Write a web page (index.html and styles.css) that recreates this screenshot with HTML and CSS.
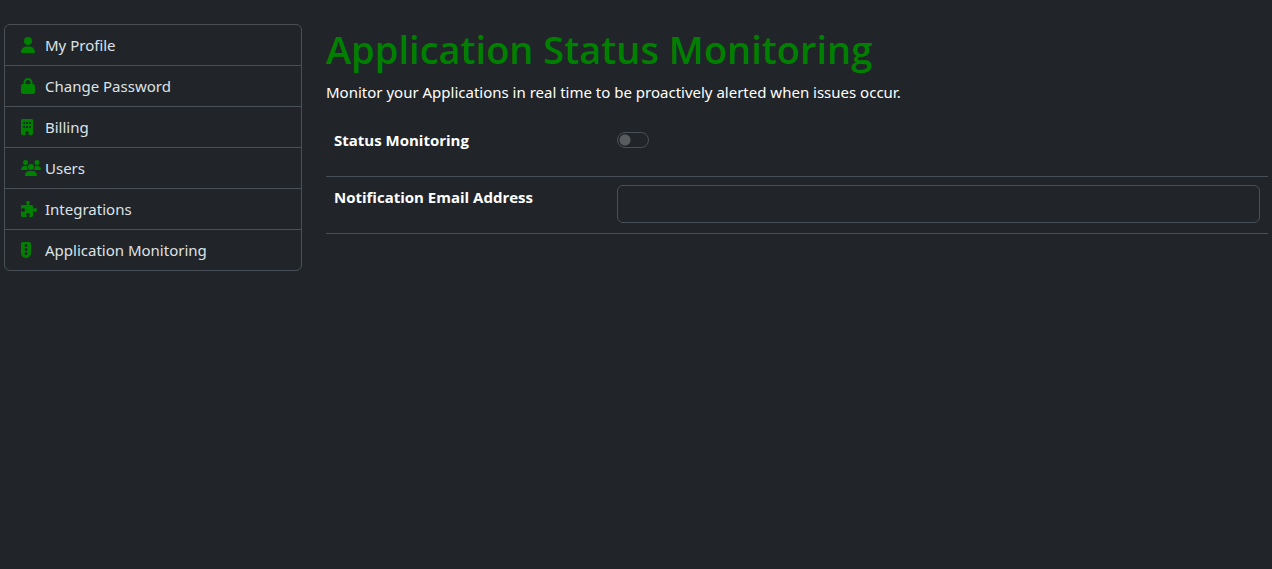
FILE: index.html
```html
<!DOCTYPE html>
<html lang="en">
<head>
<meta charset="utf-8">
<meta name="viewport" content="width=device-width, initial-scale=1">
<title>Application Status Monitoring</title>
<link rel="stylesheet" href="styles.css">
</head>
<body>
<div class="page">
  <nav class="menu" aria-label="Account">
    <a class="menu-item" href="#profile">
      <span class="icon"><svg viewBox="0 0 448 512" aria-hidden="true"><path d="M224 256A128 128 0 1 0 224 0a128 128 0 1 0 0 256zm-45.700 48C79.800 304 0 383.800 0 482.300C0 498.700 13.300 512 29.700 512H418.300c16.400 0 29.700-13.300 29.700-29.700C448 383.800 368.200 304 269.700 304H178.300z"/></svg></span>
      My Profile
    </a>
    <a class="menu-item" href="#password">
      <span class="icon"><svg viewBox="0 0 448 512" aria-hidden="true"><path d="M144 144v48H304V144c0-44.200-35.800-80-80-80s-80 35.800-80 80zM80 192V144C80 64.500 144.500 0 224 0s144 64.500 144 144v48h16c35.300 0 64 28.700 64 64V448c0 35.300-28.700 64-64 64H64c-35.300 0-64-28.700-64-64V256c0-35.300 28.700-64 64-64H80z"/></svg></span>
      Change Password
    </a>
    <a class="menu-item" href="#billing">
      <span class="icon"><svg viewBox="0 0 384 512" aria-hidden="true"><path d="M48 0C21.500 0 0 21.500 0 48V464c0 26.500 21.500 48 48 48h96V432c0-26.500 21.500-48 48-48s48 21.500 48 48v80h96c26.500 0 48-21.500 48-48V48c0-26.500-21.500-48-48-48H48zM64 240c0-8.800 7.200-16 16-16h32c8.800 0 16 7.200 16 16v32c0 8.800-7.200 16-16 16H80c-8.800 0-16-7.200-16-16V240zm112-16h32c8.800 0 16 7.200 16 16v32c0 8.800-7.200 16-16 16H176c-8.800 0-16-7.200-16-16V240c0-8.800 7.200-16 16-16zm80 16c0-8.800 7.200-16 16-16h32c8.800 0 16 7.200 16 16v32c0 8.800-7.200 16-16 16H272c-8.800 0-16-7.200-16-16V240zM80 96h32c8.800 0 16 7.200 16 16v32c0 8.800-7.200 16-16 16H80c-8.800 0-16-7.200-16-16V112c0-8.800 7.200-16 16-16zm80 16c0-8.800 7.200-16 16-16h32c8.800 0 16 7.200 16 16v32c0 8.800-7.200 16-16 16H176c-8.800 0-16-7.200-16-16V112zM272 96h32c8.800 0 16 7.200 16 16v32c0 8.800-7.200 16-16 16H272c-8.800 0-16-7.200-16-16V112c0-8.800 7.200-16 16-16z"/></svg></span>
      Billing
    </a>
    <a class="menu-item" href="#users">
      <span class="icon"><svg viewBox="0 0 640 512" aria-hidden="true"><path d="M144 0a80 80 0 1 1 0 160A80 80 0 1 1 144 0zM512 0a80 80 0 1 1 0 160A80 80 0 1 1 512 0zM0 298.700C0 239.800 47.800 192 106.700 192h42.700c15.900 0 31 3.500 44.600 9.700c-1.300 7.200-1.900 14.700-1.900 22.300c0 38.200 16.800 72.500 43.300 96c-.2 0-.4 0-.7 0H21.300C9.600 320 0 310.400 0 298.700zM405.300 320c-.2 0-.4 0-.7 0c26.600-23.500 43.300-57.800 43.300-96c0-7.600-.7-15-1.900-22.300c13.600-6.300 28.700-9.700 44.600-9.700h42.700C592.200 192 640 239.800 640 298.700c0 11.800-9.600 21.300-21.300 21.300H405.300zM224 224a96 96 0 1 1 192 0 96 96 0 1 1 -192 0zM128 485.300C128 411.700 187.700 352 261.300 352H378.700C452.300 352 512 411.700 512 485.300c0 14.700-11.900 26.700-26.700 26.700H154.700c-14.700 0-26.700-11.900-26.700-26.700z"/></svg></span>
      Users
    </a>
    <a class="menu-item" href="#integrations">
      <span class="icon"><svg viewBox="0 0 512 512" aria-hidden="true"><path d="M192 104.800c0-9.200-5.800-17.300-13.200-22.800C167.200 73.300 160 61.300 160 48c0-26.500 28.700-48 64-48s64 21.500 64 48c0 13.300-7.200 25.300-18.800 34c-7.400 5.500-13.200 13.600-13.200 22.800v0c0 12.800 10.400 23.200 23.200 23.200H336c26.500 0 48 21.500 48 48v56.800c0 12.800 10.400 23.200 23.200 23.200v0c9.200 0 17.300-5.800 22.800-13.200c8.700-11.600 20.700-18.800 34-18.800c26.500 0 48 28.700 48 64s-21.500 64-48 64c-13.300 0-25.300-7.200-34-18.800c-5.500-7.400-13.600-13.200-22.800-13.200v0c-12.800 0-23.200 10.400-23.200 23.200V464c0 26.500-21.500 48-48 48H279.200c-12.800 0-23.200-10.400-23.200-23.200v0c0-9.200 5.800-17.300 13.200-22.800c11.600-8.700 18.800-20.700 18.800-34c0-26.500-28.700-48-64-48s-64 21.500-64 48c0 13.300 7.200 25.300 18.800 34c7.400 5.500 13.200 13.600 13.200 22.800v0c0 12.800-10.400 23.200-23.200 23.200H48c-26.500 0-48-21.500-48-48V343.200C0 330.400 10.400 320 23.200 320v0c9.200 0 17.300 5.800 22.800 13.200C54.700 344.800 66.700 352 80 352c26.500 0 48-28.700 48-64s-21.500-64-48-64c-13.300 0-25.300 7.200-34 18.800C40.500 250.200 32.400 256 23.200 256v0C10.400 256 0 245.600 0 232.800V176c0-26.500 21.500-48 48-48H168.800c12.800 0 23.200-10.400 23.200-23.200v0z"/></svg></span>
      Integrations
    </a>
    <a class="menu-item" href="#monitoring">
      <span class="icon"><svg viewBox="0 0 320 512" aria-hidden="true"><path d="M64 0C28.700 0 0 28.700 0 64V352c0 88.400 71.600 160 160 160s160-71.600 160-160V64c0-35.300-28.700-64-64-64H64zm96 416a48 48 0 1 1 0-96 48 48 0 1 1 0 96zm48-176a48 48 0 1 1-96 0 48 48 0 1 1 96 0zm-48-80a48 48 0 1 1 0-96 48 48 0 1 1 0 96z"/></svg></span>
      Application Monitoring
    </a>
  </nav>
  <main class="content">
    <h1 class="title">Application Status Monitoring</h1>
    <p class="intro">Monitor your Applications in real time to be proactively alerted when issues occur.</p>
    <form class="settings">
      <div class="setting">
        <label class="setting-label" for="status">Status Monitoring</label>
        <input class="switch" type="checkbox" role="switch" id="status">
      </div>
      <div class="setting">
        <label class="setting-label" for="email">Notification Email Address</label>
        <input class="text-box" type="email" id="email">
      </div>
    </form>
  </main>
</div>
</body>
</html>
```

FILE: styles.css
```css
* {
  box-sizing: border-box;
}

body {
  margin: 0;
  background: #212529;
  color: #fff;
  font-family: "Noto Sans", "Open Sans", sans-serif;
  font-size: 15px;
  line-height: 24px;
}

.page {
  display: grid;
  grid-template-columns: calc(25% - 18px) minmax(0, 1fr);
  gap: 24px;
  align-items: start;
  padding: 24px 4px;
}

.menu {
  border: 1px solid #495057;
  border-radius: 6px;
  overflow: hidden;
}

.menu-item {
  display: flex;
  align-items: center;
  gap: 4px;
  padding: 8px 16px;
  color: #dee2e6;
  text-decoration: none;
}

.menu-item + .menu-item {
  border-top: 1px solid #495057;
}

.icon {
  display: flex;
  width: 20px;
}

.icon svg {
  height: 16px;
  fill: #008000;
}

.title {
  margin: 0 0 8px;
  padding-top: 2px;
  color: #008000;
  font-family: "Open Sans", "Noto Sans", sans-serif;
  font-size: 38px;
  font-weight: 600;
  line-height: 46px;
}

.intro {
  margin: 0 0 16px;
}

.setting {
  display: grid;
  grid-template-columns: 30% minmax(0, 1fr);
  align-items: start;
  min-height: 57px;
  border-bottom: 1px solid #495057;
}

.setting-label {
  padding: 8px;
  font-family: "Open Sans", "Noto Sans", sans-serif;
  font-weight: 700;
}

.switch {
  appearance: none;
  width: 32px;
  height: 16px;
  margin: 12px 8px;
  border: 1px solid #495057;
  border-radius: 8px;
  background: radial-gradient(circle at 7px 7px, #595c5f 5px, transparent 6px);
}

.text-box {
  height: 38px;
  margin: 8px;
  padding: 6px 12px;
  border: 1px solid #495057;
  border-radius: 6px;
  background: #212529;
  color: #dee2e6;
  font: inherit;
}
```
